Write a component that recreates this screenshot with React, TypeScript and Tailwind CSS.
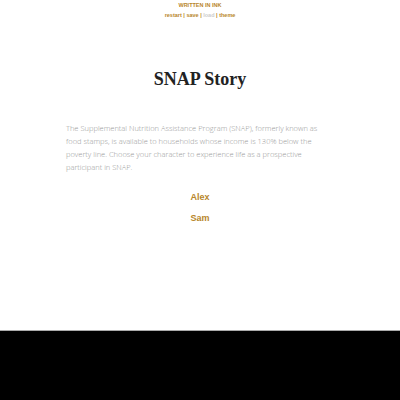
export default function App() {
  return (
    <div className="w-[400px] h-[400px] bg-white flex flex-col overflow-hidden">
      <div className="h-[330px] flex flex-col items-center">
        <div className="text-center font-['Liberation_Sans',sans-serif] font-bold text-[5.5px] leading-[10px] text-[#b8862b]">
          <p>WRITTEN IN INK</p>
          <p>
            restart | save | <span className="text-[#ccc]">load</span> | theme
          </p>
        </div>
        <h1 className="mt-[47px] font-['Liberation_Serif',serif] font-bold text-[18px] leading-[24px] text-[#222]">
          SNAP Story
        </h1>
        <p className="mt-[31px] w-[268px] font-['Open_Sans',sans-serif] font-light text-[7.5px] leading-[13px] text-[#999]">
          The Supplemental Nutrition Assistance Program (SNAP), formerly known as food stamps, is available to households whose income is 130% below the poverty line. Choose your character to experience life as a prospective participant in SNAP.
        </p>
        <div className="mt-[17px] flex flex-col items-center gap-[8px] font-['Liberation_Sans',sans-serif] font-bold text-[9px] leading-[13px] text-[#b8862b]">
          <span>Alex</span>
          <span>Sam</span>
        </div>
      </div>
      <div className="flex-1 bg-black border-t border-[#aaa]" />
    </div>
  );
}
